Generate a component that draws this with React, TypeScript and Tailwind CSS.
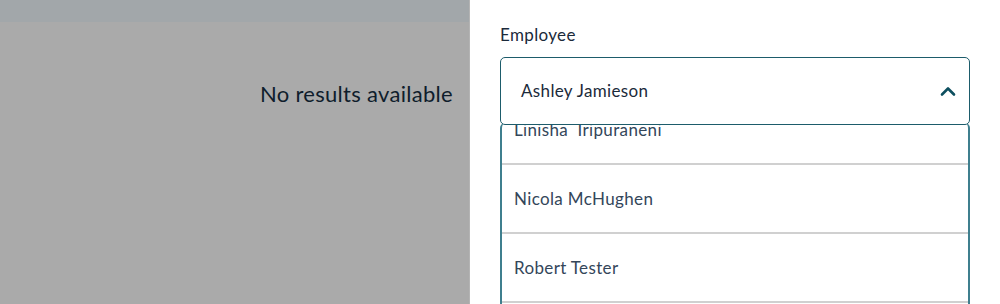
import React from "react";

export default function App() {
  const font = { fontFamily: "Lato, 'Noto Sans', sans-serif" };
  return (
    <div className="flex w-[1000px] h-[304px] overflow-hidden" style={font}>
      <div className="w-[470px] flex flex-col bg-[#aaaaaa] border-r border-[#b4b4b4]">
        <div className="h-[22px] bg-[#a2a7aa]" />
        <div className="flex justify-end pr-[16px] pt-[57px]">
          <span className="text-[22px] leading-[30px] tracking-[0.3px] text-[#0f1d2c]">No results available</span>
        </div>
      </div>
      <div className="flex-1 bg-white px-[30px] pt-[24px] flex flex-col">
        <div className="text-[17px] leading-[22px] tracking-[0.35px] text-[#1b2a3a] mb-[11px]">Employee</div>
        <div className="relative z-10 h-[68px] rounded-[5px] border border-[#1d5c6b] bg-white flex items-center justify-between pl-[20px] pr-[12px]">
          <span className="text-[17px] tracking-[0.35px] text-[#1b2a3a]">Ashley Jamieson</span>
          <svg width="18" height="12" viewBox="0 0 18 12" fill="none">
            <path d="M3 9.5 L9 3.5 L15 9.5" stroke="#0d4f5f" strokeWidth="2.6" strokeLinecap="round" strokeLinejoin="round" />
          </svg>
        </div>
        <div className="-mt-[2px] flex-1 overflow-hidden border-x-2 border-[#3f7f8e] rounded-t-[5px] bg-white">
          <div className="-mt-[27px] flex flex-col">
            {["Linisha  Iripuraneni", "Nicola McHughen", "Robert Tester"].map((n) => (
              <div key={n} className="h-[69px] shrink-0 flex items-center pl-[12px] border-b-2 border-[#d0d0d0] text-[17px] tracking-[0.35px] text-[#34465a] whitespace-pre">
                {n}
              </div>
            ))}
          </div>
        </div>
      </div>
    </div>
  );
}
